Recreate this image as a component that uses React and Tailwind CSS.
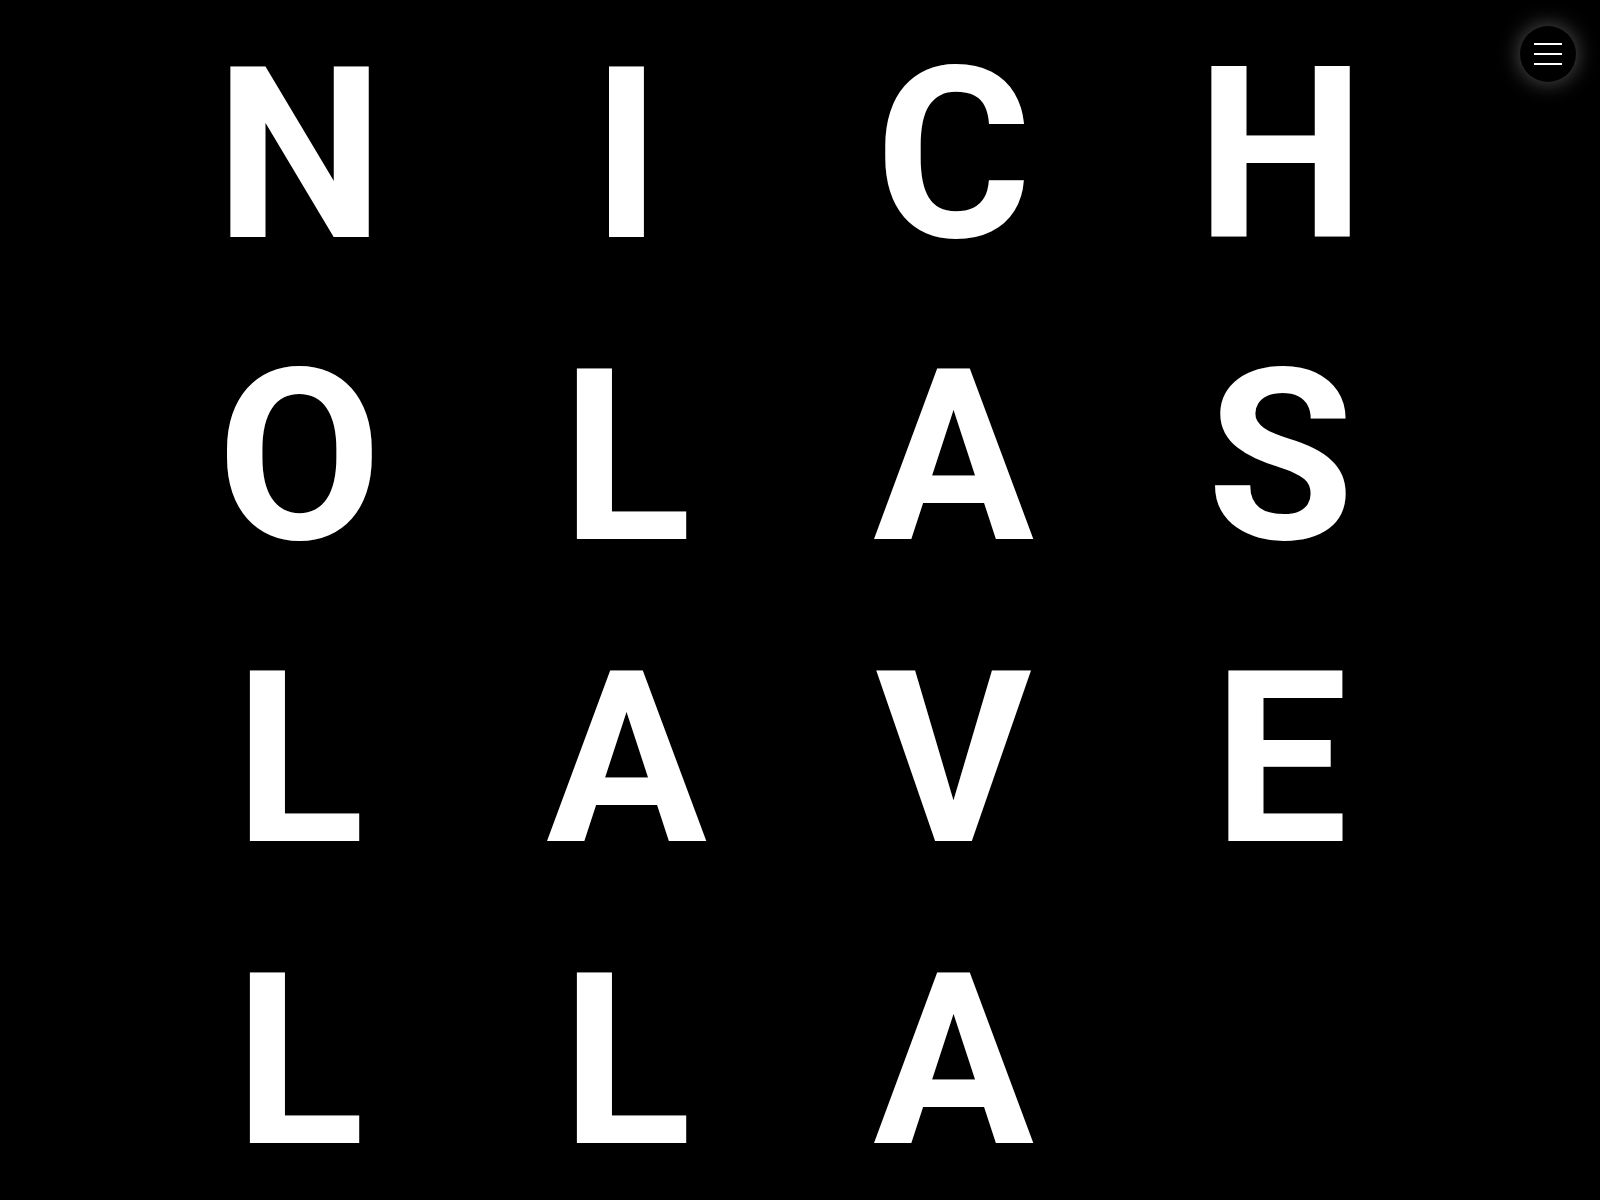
const rows = [
  ["N", "I", "C", "H"],
  ["O", "L", "A", "S"],
  ["L", "A", "V", "E"],
  ["L", "L", "A", ""],
];

export default function App() {
  return (
    <div className="relative min-h-[1200px] w-full overflow-hidden bg-black" style={{ fontFamily: "Roboto, 'Noto Sans', sans-serif" }}>
      <button className="absolute right-6 top-[26px] flex h-14 w-14 flex-col items-center justify-center gap-2 rounded-full bg-black shadow-[0_0_22px_rgba(255,255,255,0.35)]">
        <span className="block h-[2px] w-7 bg-white" />
        <span className="block h-[2px] w-7 bg-white" />
        <span className="block h-[2px] w-7 bg-white" />
      </button>

      <div className="ml-[136px] grid w-[1308px] grid-cols-4 pt-[20px]">
        {rows.flat().map((ch, i) => (
          <div key={i} className="flex h-[302px] items-start justify-center text-[239px] font-bold leading-[270px] text-white">
            {ch}
          </div>
        ))}
      </div>
    </div>
  );
}
